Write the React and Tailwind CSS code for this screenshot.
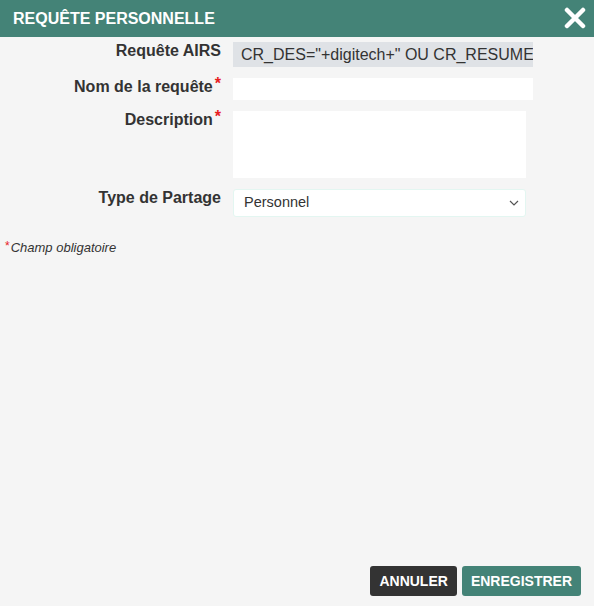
import React from "react";

function Req() {
  return <span className="text-[#e8201f] text-[16px] relative -top-[3px] ml-[2px]">*</span>;
}

export default function App() {
  return (
    <div className="w-[594px] h-[606px] flex flex-col bg-[#f5f5f5] font-['Liberation_Sans',Arial,sans-serif] text-[#333]">
      <div className="h-[37px] bg-[#448377] flex items-center justify-between pl-[13px] pr-[8px] shrink-0">
        <span className="text-white font-bold text-[16px] tracking-[0px]">REQUÊTE PERSONNELLE</span>
        <svg width="22" height="22" viewBox="0 0 22 22" className="mt-[-2px]">
          <path d="M3 3 L19 19 M19 3 L3 19" stroke="white" strokeWidth="4.5" strokeLinecap="round" />
        </svg>
      </div>
      <div className="flex flex-col gap-[11px] pt-[5px]">
        <div className="flex">
          <div className="w-[221px] text-right font-bold text-[16px] leading-[18px]">Requête AIRS</div>
          <div className="ml-[12px] w-[300px] h-[25px] bg-[#dfe2e6] overflow-hidden whitespace-nowrap pl-[8px] text-[16px] leading-[25px] text-[#333]">
            CR_DES="+digitech+" OU CR_RESUME
          </div>
        </div>
        <div className="flex">
          <div className="w-[221px] text-right font-bold text-[16px] leading-[18px]">Nom de la requête<Req /></div>
          <div className="ml-[12px] w-[300px] h-[22px] bg-white" />
        </div>
        <div className="flex">
          <div className="w-[221px] text-right font-bold text-[16px] leading-[18px]">Description<Req /></div>
          <div className="ml-[12px] w-[293px] h-[67px] bg-white" />
        </div>
        <div className="flex">
          <div className="w-[221px] text-right font-bold text-[16px] leading-[18px]">Type de Partage</div>
          <div className="ml-[12px] w-[293px] h-[28px] bg-white border border-[#e3f6f1] rounded-[3px] flex items-center justify-between pl-[10px] pr-[6px]">
            <span className="text-[14.5px] text-[#333]">Personnel</span>
            <svg width="10" height="6" viewBox="0 0 10 6">
              <path d="M1 1 L5 5 L9 1" stroke="#555" strokeWidth="1.2" fill="none" />
            </svg>
          </div>
        </div>
      </div>
      <div className="mt-[21px] pl-[5px] text-[13px] italic text-[#333]">
        <span className="text-[#e8201f] not-italic text-[12px] relative -top-[2px] mr-[1px]">*</span>Champ obligatoire
      </div>
      <div className="flex-1" />
      <div className="flex justify-end gap-[5px] pr-[13px] pb-[10px]">
        <button className="h-[30px] px-[9px] bg-[#333] text-white font-bold text-[14px] rounded-[3px]">ANNULER</button>
        <button className="h-[30px] px-[9px] bg-[#448377] text-white font-bold text-[14px] rounded-[3px]">ENREGISTRER</button>
      </div>
    </div>
  );
}
